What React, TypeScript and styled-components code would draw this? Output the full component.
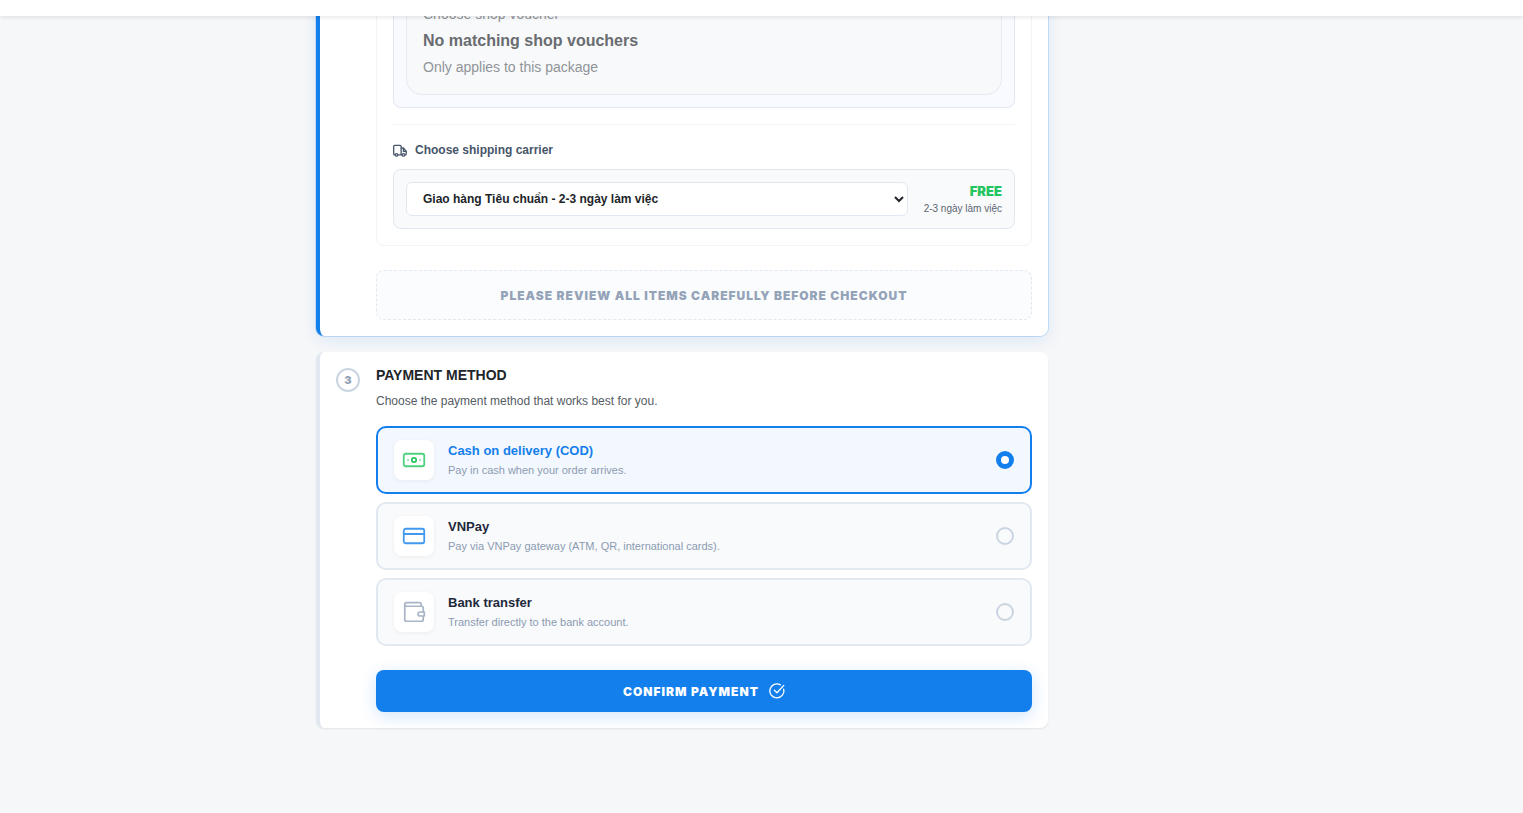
import React, { useState } from "react";
import styled, { createGlobalStyle, css } from "styled-components";

const GlobalStyle = createGlobalStyle`
  *, *::before, *::after { box-sizing: border-box; }
  body {
    margin: 0;
    background: #f6f7f8;
    color: #212529;
    font-family: "Liberation Sans", Arial, sans-serif;
  }
  h2, p { margin: 0; }
`;

const black = css`
  font-family: Inter, "Liberation Sans", sans-serif;
  font-weight: 900;
`;

const Page = styled.div`
  display: flex;
  flex-direction: column;
  min-height: 100vh;
`;

const TopBar = styled.header`
  position: sticky;
  top: 0;
  z-index: 10;
  height: 16px;
  background: #fff;
  box-shadow: 0 2px 4px rgba(0, 0, 0, 0.08);
`;

const Main = styled.main`
  width: 100%;
  max-width: 891px;
  margin: -16px auto 0;
`;

const Steps = styled.div`
  display: flex;
  flex-direction: column;
  gap: 16px;
  max-width: 732px;
`;

const StepCard = styled.section<{ $active?: boolean }>`
  display: grid;
  grid-template-columns: 24px minmax(0, 1fr);
  column-gap: 16px;
  padding: 16px;
  background: #fff;
  border-left: 4px solid ${(p) => (p.$active ? "#137fec" : "#e2e8f0")};
  border-radius: 8px;
  box-shadow: ${(p) =>
    p.$active
      ? "0 0 0 1px rgba(19, 127, 236, 0.2), 0 4px 16px rgba(19, 127, 236, 0.12)"
      : "0 1px 2px rgba(0, 0, 0, 0.08)"};
  ${(p) =>
    p.$active &&
    css`
      padding-top: 0;
      border-top-left-radius: 0;
      border-top-right-radius: 0;
    `}
`;

const StepBody = styled.div`
  grid-column: 2;
`;

const StepNumber = styled.span`
  ${black}
  display: flex;
  align-items: center;
  justify-content: center;
  width: 24px;
  height: 24px;
  border: 2px solid #cbd5e1;
  border-radius: 50%;
  color: #94a3b8;
  font-size: 11px;
`;

const PackageBox = styled.div`
  padding: 0 16px 16px;
  border: 1px solid #f1f5f9;
  border-top: 0;
  border-radius: 0 0 8px 8px;
`;

const VoucherFrame = styled.div`
  padding: 0 12px 12px;
  background: #f8faff;
  border: 1px solid #e2e8f0;
  border-top: 0;
  border-radius: 0 0 8px 8px;
`;

const VoucherCard = styled.div`
  display: flex;
  flex-direction: column;
  gap: 4px;
  padding: 4px 16px 16px;
  background: #f8f9fb;
  border: 1px solid #e8eaef;
  border-top: 0;
  border-radius: 0 0 16px 16px;
`;

const VoucherText = styled.p`
  color: #909498;
  font-size: 14px;
  line-height: 21px;
`;

const VoucherTitle = styled.p`
  color: #696c70;
  font-size: 16px;
  font-weight: 700;
  line-height: 24px;
`;

const Carrier = styled.div`
  margin-top: 16px;
  padding-top: 16px;
  border-top: 1px solid #f1f5f9;
`;

const CarrierLabel = styled.label`
  display: flex;
  align-items: center;
  gap: 8px;
  margin-bottom: 10px;
  color: #475569;
  font-size: 12px;
  font-weight: 700;
  line-height: 18px;
`;

const CarrierRow = styled.div`
  display: flex;
  align-items: center;
  gap: 16px;
  padding: 12px;
  background: #f8fafc;
  border: 1px solid #e2e8f0;
  border-radius: 8px;
`;

const CarrierSelect = styled.select`
  flex: 1;
  min-width: 0;
  height: 34px;
  padding: 0 0 0 12px;
  background: #fff;
  border: 1px solid #e2e8f0;
  border-radius: 6px;
  color: #212529;
  font-family: inherit;
  font-size: 12px;
  font-weight: 700;
`;

const CarrierCost = styled.div`
  display: flex;
  flex-direction: column;
  gap: 2px;
  text-align: right;
`;

const Free = styled.strong`
  ${black}
  color: #22c55e;
  font-size: 13px;
  line-height: 18px;
`;

const Eta = styled.span`
  color: #5c6570;
  font-size: 10px;
  line-height: 14px;
`;

const Notice = styled.p`
  ${black}
  margin-top: 24px;
  padding: 16px 16px 14px;
  background: #fbfcfe;
  border: 1px dashed #e2e8f0;
  border-radius: 8px;
  color: #94a3b8;
  font-size: 12px;
  letter-spacing: 1px;
  line-height: 18px;
  text-align: center;
  text-transform: uppercase;
`;

const StepTitle = styled.h2`
  font-size: 14px;
  font-weight: 700;
  line-height: 14px;
  text-transform: uppercase;
`;

const StepHint = styled.p`
  margin-top: 10px;
  color: #555c63;
  font-size: 12px;
  line-height: 18px;
`;

const Options = styled.div`
  display: flex;
  flex-direction: column;
  gap: 8px;
  margin: 16px 0 24px;
`;

const Option = styled.label<{ $selected: boolean }>`
  display: flex;
  align-items: center;
  gap: 14px;
  padding: 12px 16px;
  background: ${(p) => (p.$selected ? "#f3f8fe" : "#f8fafc")};
  border: 2px solid ${(p) => (p.$selected ? "#137fec" : "#e2e8f0")};
  border-radius: 10px;
  cursor: pointer;
`;

const OptionIcon = styled.span`
  display: flex;
  align-items: center;
  justify-content: center;
  width: 40px;
  height: 40px;
  background: #fff;
  border-radius: 8px;
  box-shadow: 0 1px 4px rgba(0, 0, 0, 0.06);
`;

const OptionText = styled.span`
  display: flex;
  flex: 1;
  flex-direction: column;
  gap: 2px;
  padding-bottom: 2px;
`;

const OptionName = styled.span<{ $selected: boolean }>`
  color: ${(p) => (p.$selected ? "#137fec" : "#1e293b")};
  font-size: 13px;
  font-weight: 700;
  line-height: 20px;
`;

const OptionHint = styled.span`
  color: #8c9bb1;
  font-size: 11px;
  line-height: 14px;
`;

const Radio = styled.input`
  appearance: none;
  width: 18px;
  height: 18px;
  margin: 0;
  background: transparent;
  border: 2px solid #cbd5e1;
  border-radius: 50%;
  &:checked {
    background: #fff;
    border: 5px solid #137fec;
  }
`;

const ConfirmButton = styled.button`
  ${black}
  display: flex;
  align-items: center;
  justify-content: center;
  gap: 10px;
  width: 100%;
  height: 42px;
  padding: 0;
  background: #137fec;
  border: 0;
  border-radius: 8px;
  box-shadow: 0 4px 16px rgba(19, 127, 236, 0.2);
  color: #fff;
  font-size: 12px;
  letter-spacing: 1px;
  text-transform: uppercase;
  cursor: pointer;
`;

const Glyph = styled.svg`
  display: block;
  flex: none;
  fill: none;
  stroke: currentColor;
  stroke-linecap: round;
  stroke-linejoin: round;
`;

const TruckIcon = () => (
  <Glyph width="14" height="14" viewBox="0 0 14 14" strokeWidth="1.3" aria-hidden="true">
    <path d="M2.1 11.9h-.4a1 1 0 0 1-1-1V3.3a1 1 0 0 1 1-1h5.4a1 1 0 0 1 1 1v8.6M4.9 11.9h3.9M8.1 5h1.8c.5 0 .8.2 1 .5l1.9 2.3c.3.3.4.6.4 1v2.1a1 1 0 0 1-1 1" />
    <circle cx="3.5" cy="11.9" r="1.3" />
    <circle cx="10.4" cy="11.9" r="1.3" />
    <path d="M10.4 5.4v2.9h2.6" />
  </Glyph>
);

const CashIcon = () => (
  <Glyph width="24" height="24" viewBox="0 0 24 24" color="#22c55e" aria-hidden="true">
    <rect x="1.75" y="5.75" width="20.5" height="12.5" rx="2" strokeWidth="1.8" opacity="0.8" />
    <circle cx="12" cy="12" r="2.2" strokeWidth="1.7" />
    <path d="M6 12h.01M18 12h.01" strokeWidth="1.8" opacity="0.6" />
  </Glyph>
);

const CardIcon = () => (
  <Glyph width="24" height="24" viewBox="0 0 24 24" color="#137fec" strokeWidth="1.8" aria-hidden="true">
    <g opacity="0.8">
      <rect x="1.75" y="4.75" width="20.5" height="14.5" rx="2" />
      <path d="M2 10h20" />
    </g>
  </Glyph>
);

const WalletIcon = () => (
  <Glyph width="24" height="24" viewBox="0 0 24 24" color="#94a3b8" strokeWidth="1.7" aria-hidden="true">
    <g opacity="0.8">
      <path d="M19.2 6.2V4.2a1.5 1.5 0 0 0-1.5-1.5H4.5a1.75 1.75 0 0 0-1.75 1.75V19.5a1.75 1.75 0 0 0 1.75 1.75h15a1.75 1.75 0 0 0 1.75-1.75v-3.2M21.25 11.7V8a1.75 1.75 0 0 0-1.75-1.75h-15a1.75 1.75 0 0 1-1.7-1.6" />
      <path d="M22.3 12v4h-4.2a2 2 0 0 1 0-4z" />
    </g>
  </Glyph>
);

const CheckIcon = () => (
  <Glyph width="16" height="16" viewBox="0 0 16 16" strokeWidth="1.3" aria-hidden="true">
    <path d="M14.6 6.1A7 7 0 1 1 11.4 1.9" />
    <path d="M5.4 7.2 8 9.8l6.8-7.4" />
  </Glyph>
);

const methods = [
  { id: "cod", name: "Cash on delivery (COD)", hint: "Pay in cash when your order arrives.", icon: <CashIcon /> },
  { id: "vnpay", name: "VNPay", hint: "Pay via VNPay gateway (ATM, QR, international cards).", icon: <CardIcon /> },
  { id: "bank", name: "Bank transfer", hint: "Transfer directly to the bank account.", icon: <WalletIcon /> },
];

export default function App() {
  const [method, setMethod] = useState("cod");

  return (
    <Page>
      <GlobalStyle />
      <TopBar />
      <Main>
        <Steps>
          <StepCard $active>
            <StepBody>
              <PackageBox>
                <VoucherFrame>
                  <VoucherCard>
                    <VoucherText>Choose shop voucher</VoucherText>
                    <VoucherTitle>No matching shop vouchers</VoucherTitle>
                    <VoucherText>Only applies to this package</VoucherText>
                  </VoucherCard>
                </VoucherFrame>
                <Carrier>
                  <CarrierLabel htmlFor="carrier">
                    <TruckIcon />
                    Choose shipping carrier
                  </CarrierLabel>
                  <CarrierRow>
                    <CarrierSelect id="carrier">
                      <option>Giao hàng Tiêu chuẩn - 2-3 ngày làm việc</option>
                    </CarrierSelect>
                    <CarrierCost>
                      <Free>FREE</Free>
                      <Eta>2-3 ngày làm việc</Eta>
                    </CarrierCost>
                  </CarrierRow>
                </Carrier>
              </PackageBox>
              <Notice>Please review all items carefully before checkout</Notice>
            </StepBody>
          </StepCard>

          <StepCard>
            <StepNumber>3</StepNumber>
            <StepBody>
              <StepTitle>Payment method</StepTitle>
              <StepHint>Choose the payment method that works best for you.</StepHint>
              <Options role="radiogroup" aria-label="Payment method">
                {methods.map((m) => (
                  <Option key={m.id} $selected={m.id === method}>
                    <OptionIcon>{m.icon}</OptionIcon>
                    <OptionText>
                      <OptionName $selected={m.id === method}>{m.name}</OptionName>
                      <OptionHint>{m.hint}</OptionHint>
                    </OptionText>
                    <Radio
                      type="radio"
                      name="method"
                      value={m.id}
                      checked={m.id === method}
                      onChange={() => setMethod(m.id)}
                    />
                  </Option>
                ))}
              </Options>
              <ConfirmButton type="button">
                Confirm payment
                <CheckIcon />
              </ConfirmButton>
            </StepBody>
          </StepCard>
        </Steps>
      </Main>
    </Page>
  );
}
